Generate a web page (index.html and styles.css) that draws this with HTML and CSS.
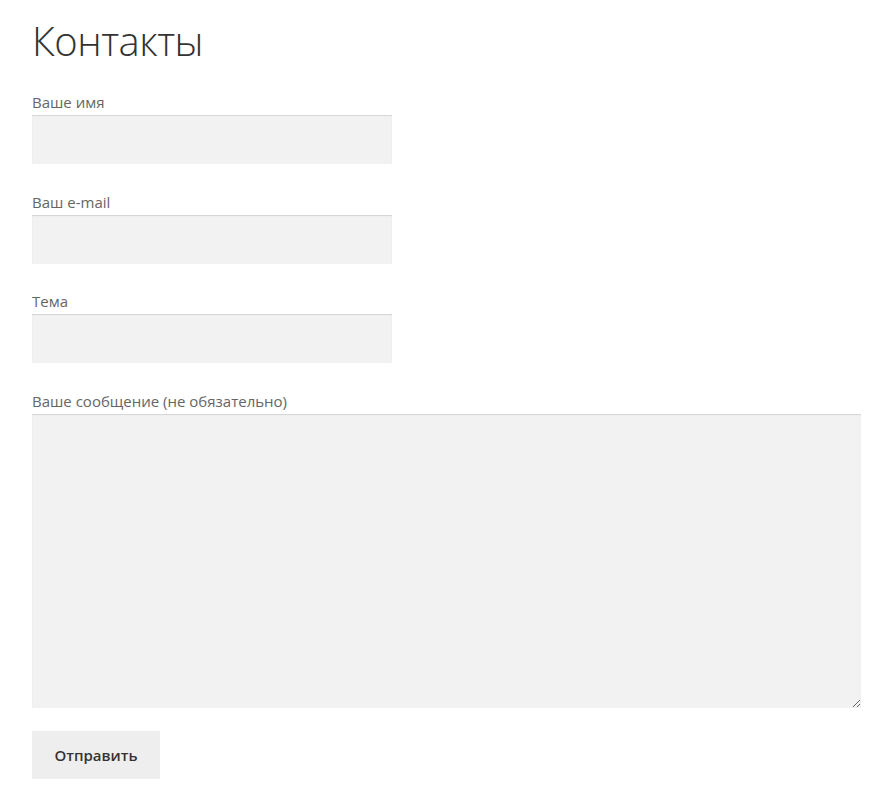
FILE: index.html
```html
<!DOCTYPE html>
<html lang="ru">
<head>
<meta charset="utf-8">
<title>Контакты</title>
<link rel="stylesheet" href="styles.css">
</head>
<body>
<main class="page">
  <h1 class="title">Контакты</h1>
  <form class="form">
    <div class="field">
      <label class="label" for="name">Ваше имя</label>
      <input class="input" id="name" type="text">
    </div>
    <div class="field">
      <label class="label" for="email">Ваш e-mail</label>
      <input class="input" id="email" type="email">
    </div>
    <div class="field">
      <label class="label" for="subject">Тема</label>
      <input class="input" id="subject" type="text">
    </div>
    <div class="field field-message">
      <label class="label" for="msg">Ваше сообщение (не обязательно)</label>
      <textarea class="textarea" id="msg"></textarea>
    </div>
    <button class="button" type="button">Отправить</button>
  </form>
</main>
</body>
</html>
```
FILE: styles.css
```css
html, body {
  margin: 0;
  padding: 0;
  background: #ffffff;
}
body {
  font-family: "Open Sans", "Noto Sans", sans-serif;
  color: #6d6d6d;
}
.page {
  padding: 16px 29px 0 32px;
}
.title {
  margin: 0 0 24px 0;
  font-size: 40px;
  line-height: 50px;
  font-weight: 300;
  color: #333333;
  letter-spacing: -0.5px;
}
.form {
  display: flex;
  flex-direction: column;
}
.field {
  display: flex;
  flex-direction: column;
  margin-bottom: 25.5px;
}
.field-message {
  margin-bottom: 23.5px;
}
.label {
  font-size: 15px;
  line-height: 25px;
  color: #666666;
}
.input, .textarea {
  box-sizing: border-box;
  border: 0;
  margin: 0;
  background: #f2f2f2;
  box-shadow: inset 0 1px 1px rgba(0,0,0,0.125);
  outline: none;
  font-family: inherit;
  padding: 0;
}
.input {
  width: 360px;
  height: 49px;
}
.textarea {
  width: 100%;
  height: 294px;
  display: block;
}
.button {
  align-self: flex-start;
  width: 128px;
  height: 48px;
  border: 0;
  background: #eeeeee;
  color: #333333;
  font-family: inherit;
  font-size: 15px;
  font-weight: 600;
  padding: 0;
  margin: 0;
}
```
